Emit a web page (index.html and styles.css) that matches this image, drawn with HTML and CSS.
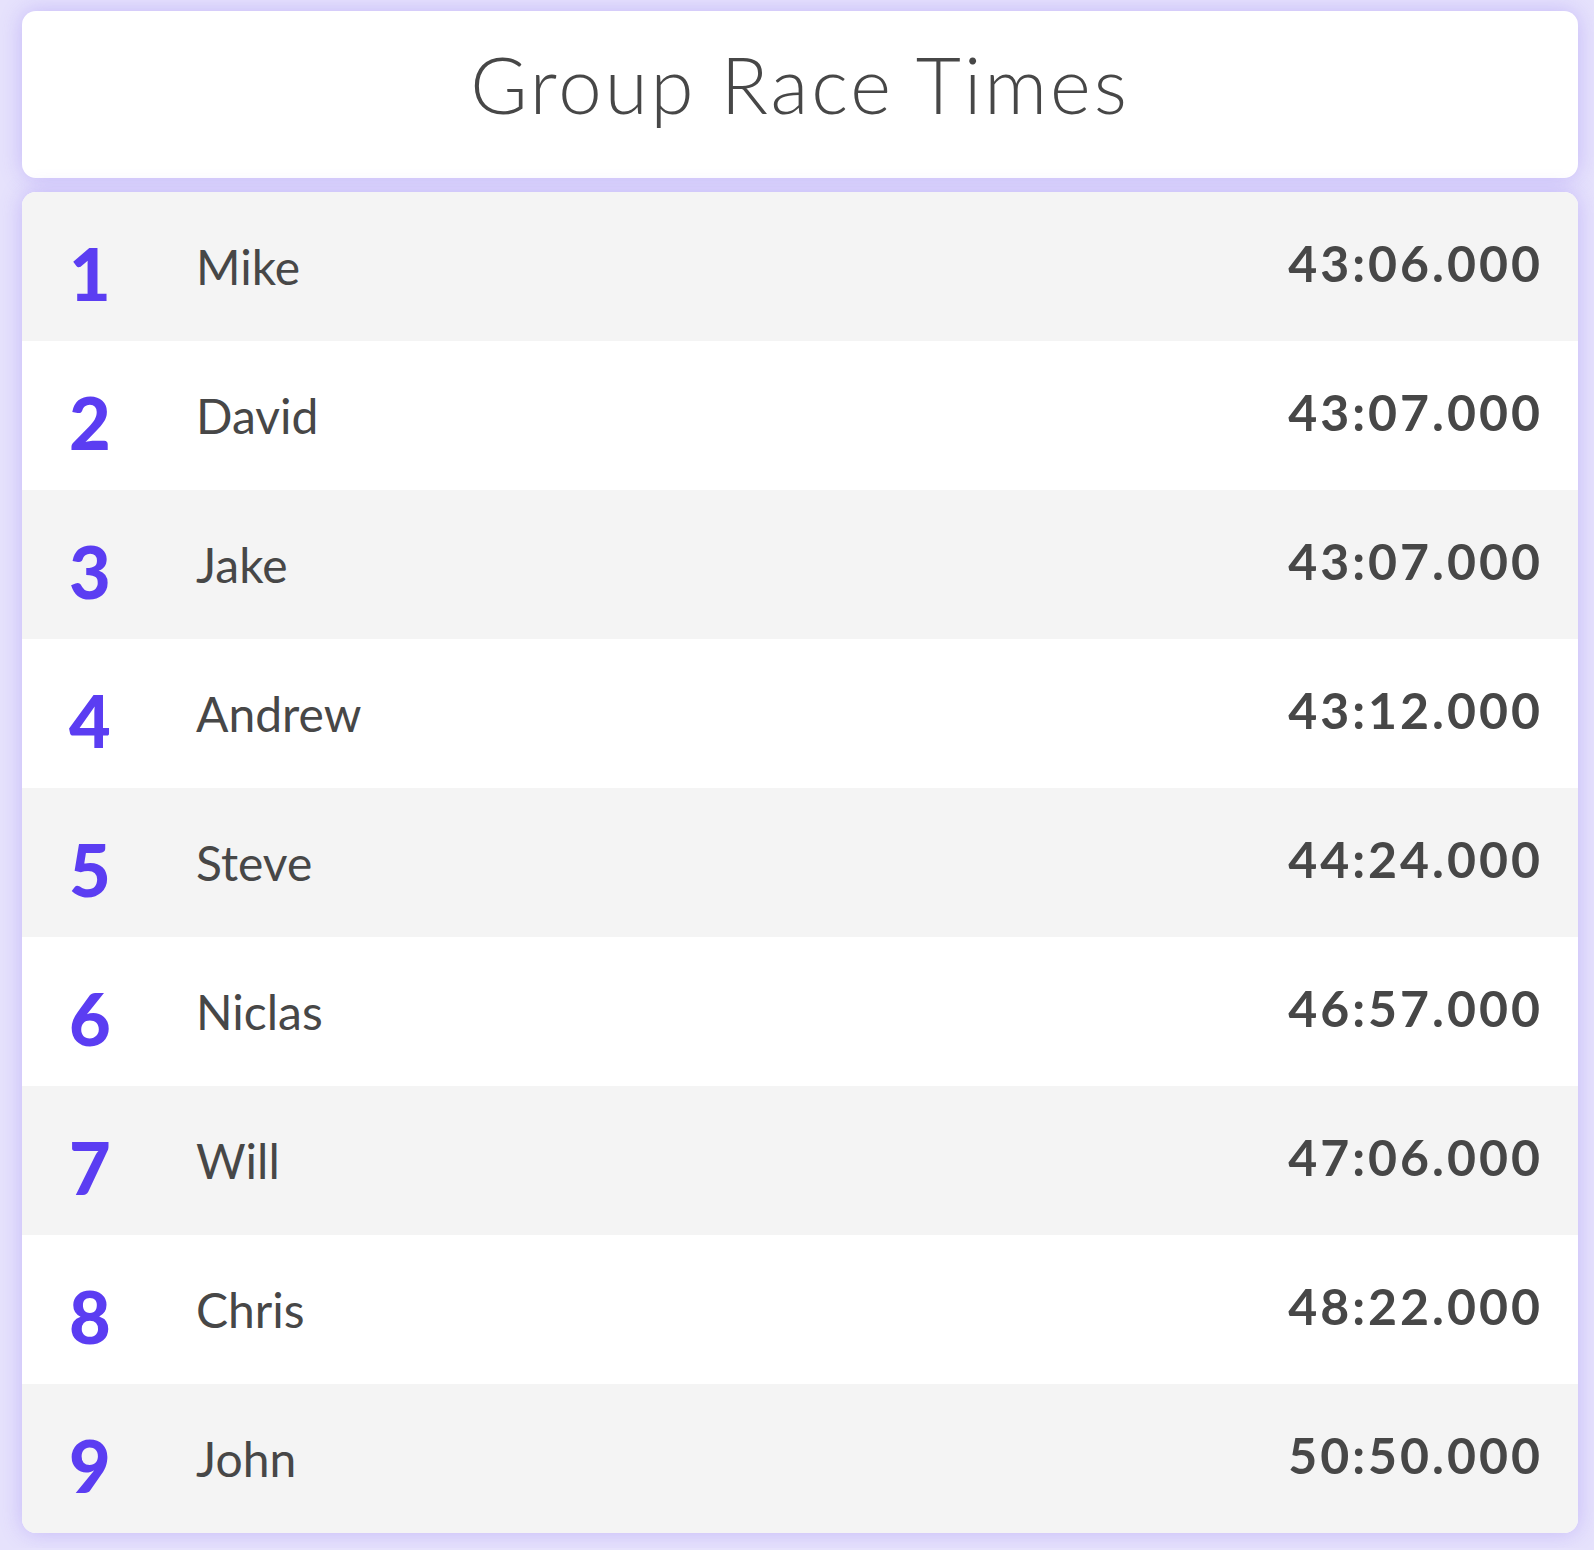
FILE: index.html
```html
<!doctype html>
<html lang="en">
	<head>
		<title>Group Race Times</title>
		<meta charset="utf-8">
		<link rel="stylesheet" href="styles.css">
	</head>

	<body>
		<div class="header card">
			<h1>Group Race Times</h1>
		</div>

		<div class="results card">
			<div class="row"><span class="rank">1</span><span class="name">Mike</span><span class="time">43:06.000</span></div>
			<div class="row"><span class="rank">2</span><span class="name">David</span><span class="time">43:07.000</span></div>
			<div class="row"><span class="rank">3</span><span class="name">Jake</span><span class="time">43:07.000</span></div>
			<div class="row"><span class="rank">4</span><span class="name">Andrew</span><span class="time">43:12.000</span></div>
			<div class="row"><span class="rank">5</span><span class="name">Steve</span><span class="time">44:24.000</span></div>
			<div class="row"><span class="rank">6</span><span class="name">Niclas</span><span class="time">46:57.000</span></div>
			<div class="row"><span class="rank">7</span><span class="name">Will</span><span class="time">47:06.000</span></div>
			<div class="row"><span class="rank">8</span><span class="name">Chris</span><span class="time">48:22.000</span></div>
			<div class="row"><span class="rank">9</span><span class="name">John</span><span class="time">50:50.000</span></div>
		</div>
	</body>
</html>
```

FILE: styles.css
```css
html, body {
	margin:0;
	padding:0;
	background:#e6e2fc;
	font-family:Lato, "Open Sans", sans-serif;
	color:#474747;
}

body {
	padding:11px 16px 15px 22px;
	display:flex;
	flex-direction:column;
	gap:14px;
}

.card {
	background:#ffffff;
	border-radius:14px;
	box-shadow:0 0 22px rgba(110, 80, 240, 0.28);
	overflow:hidden;
}

.header {
	height:167px;
	box-sizing:border-box;
	padding-bottom:22px;
	display:flex;
	align-items:center;
	justify-content:center;
}

.header h1 {
	margin:0;
	font-size:78px;
	font-weight:300;
	letter-spacing:3px;
	color:#474747;
}

.row {
	height:149px;
	display:flex;
	align-items:center;
	padding:0 35px 0 47px;
	box-sizing:border-box;
}

.row:nth-child(odd) {
	background:#f4f4f4;
}

.rank {
	width:127px;
	margin-top:12px;
	font-size:72px;
	font-weight:900;
	letter-spacing:2px;
	color:#5b3df2;
}

.name {
	flex:1;
	font-size:48px;
	font-weight:400;
}

.time {
	margin-bottom:8px;
	font-size:50px;
	font-weight:700;
	letter-spacing:3px;
}
```
